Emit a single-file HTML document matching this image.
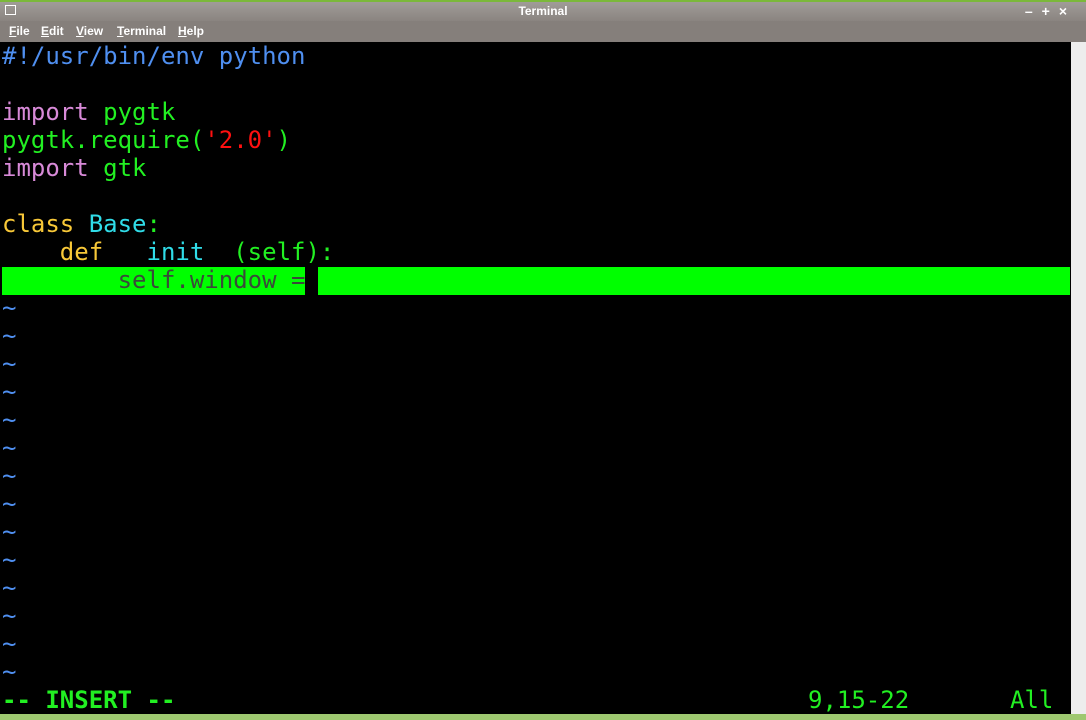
<!DOCTYPE html>
<html><head><style>
body{margin:0;width:1086px;height:720px;overflow:hidden;background:#ededed;position:relative;font-family:"DejaVu Sans Mono",monospace}
#title{position:absolute;left:0;top:0;width:1086px;height:21px;background:linear-gradient(#a09c98,#8a8480);border-top:2px solid #7bb83a;box-sizing:border-box;color:#fff;font:bold 12px "Liberation Sans",sans-serif;text-align:center;line-height:19px}
#menu{position:absolute;left:0;top:21px;width:1086px;height:21px;background:#857f7b;font:bold 12px "Liberation Sans",sans-serif;color:#fff}
#menu span{position:absolute;top:3px}
#term{position:absolute;left:0;top:42px;width:1071px;height:672px;background:#000}
.r{position:absolute;left:2px;height:28px;line-height:28px;font-size:24px;white-space:pre;letter-spacing:0}
.b{color:#4f8ff0}.m{color:#d88ad8}.g{color:#22f022}.red{color:#ff1010}.y{color:#f8c838}.c{color:#30dce8}
#bot{position:absolute;left:0;top:714px;width:1086px;height:6px;background:#9ec870}
</style></head><body>
<div id="title">Terminal
<span style="position:absolute;left:5px;top:3px;width:11px;height:10px;border:1px solid #fff;box-sizing:border-box"></span>
<span style="position:absolute;right:10px;top:0;font-size:14px;letter-spacing:9px">–+×</span></div>
<div id="menu"><span style="left:9px"><u>F</u>ile</span><span style="left:41px"><u>E</u>dit</span><span style="left:76px"><u>V</u>iew</span><span style="left:117px"><u>T</u>erminal</span><span style="left:178px"><u>H</u>elp</span></div>
<div id="term">
<div class="r b" style="top:0">#!/usr/bin/env python</div>
<div class="r" style="top:56px"><span class="m">import</span> <span class="g">pygtk</span></div>
<div class="r g" style="top:84px">pygtk.require(<span class="red">'2.0'</span>)</div>
<div class="r" style="top:112px"><span class="m">import</span> <span class="g">gtk</span></div>
<div class="r" style="top:168px"><span class="y">class</span> <span class="c">Base</span><span class="g">:</span></div>
<div class="r" style="top:196px">    <span class="y">def</span>   <span class="c">init</span>  <span class="g">(self):</span></div>
<div style="position:absolute;left:2px;top:225px;width:303px;height:28px;background:#00ff00"></div>
<div style="position:absolute;left:318px;top:225px;width:752px;height:28px;background:#00ff00"></div>
<div class="r" style="top:224px;color:#3a4a3a">        self.window =</div>
<div class="r b" style="top:252px;line-height:28px">~<br>~<br>~<br>~<br>~<br>~<br>~<br>~<br>~<br>~<br>~<br>~<br>~<br>~</div>
<div class="r g" style="top:644px;font-weight:bold">-- INSERT --</div>
<div class="r g" style="top:644px;left:808px">9,15-22</div>
<div class="r g" style="top:644px;left:1010px">All</div>
</div>
<div id="bot"></div>
</body></html>
